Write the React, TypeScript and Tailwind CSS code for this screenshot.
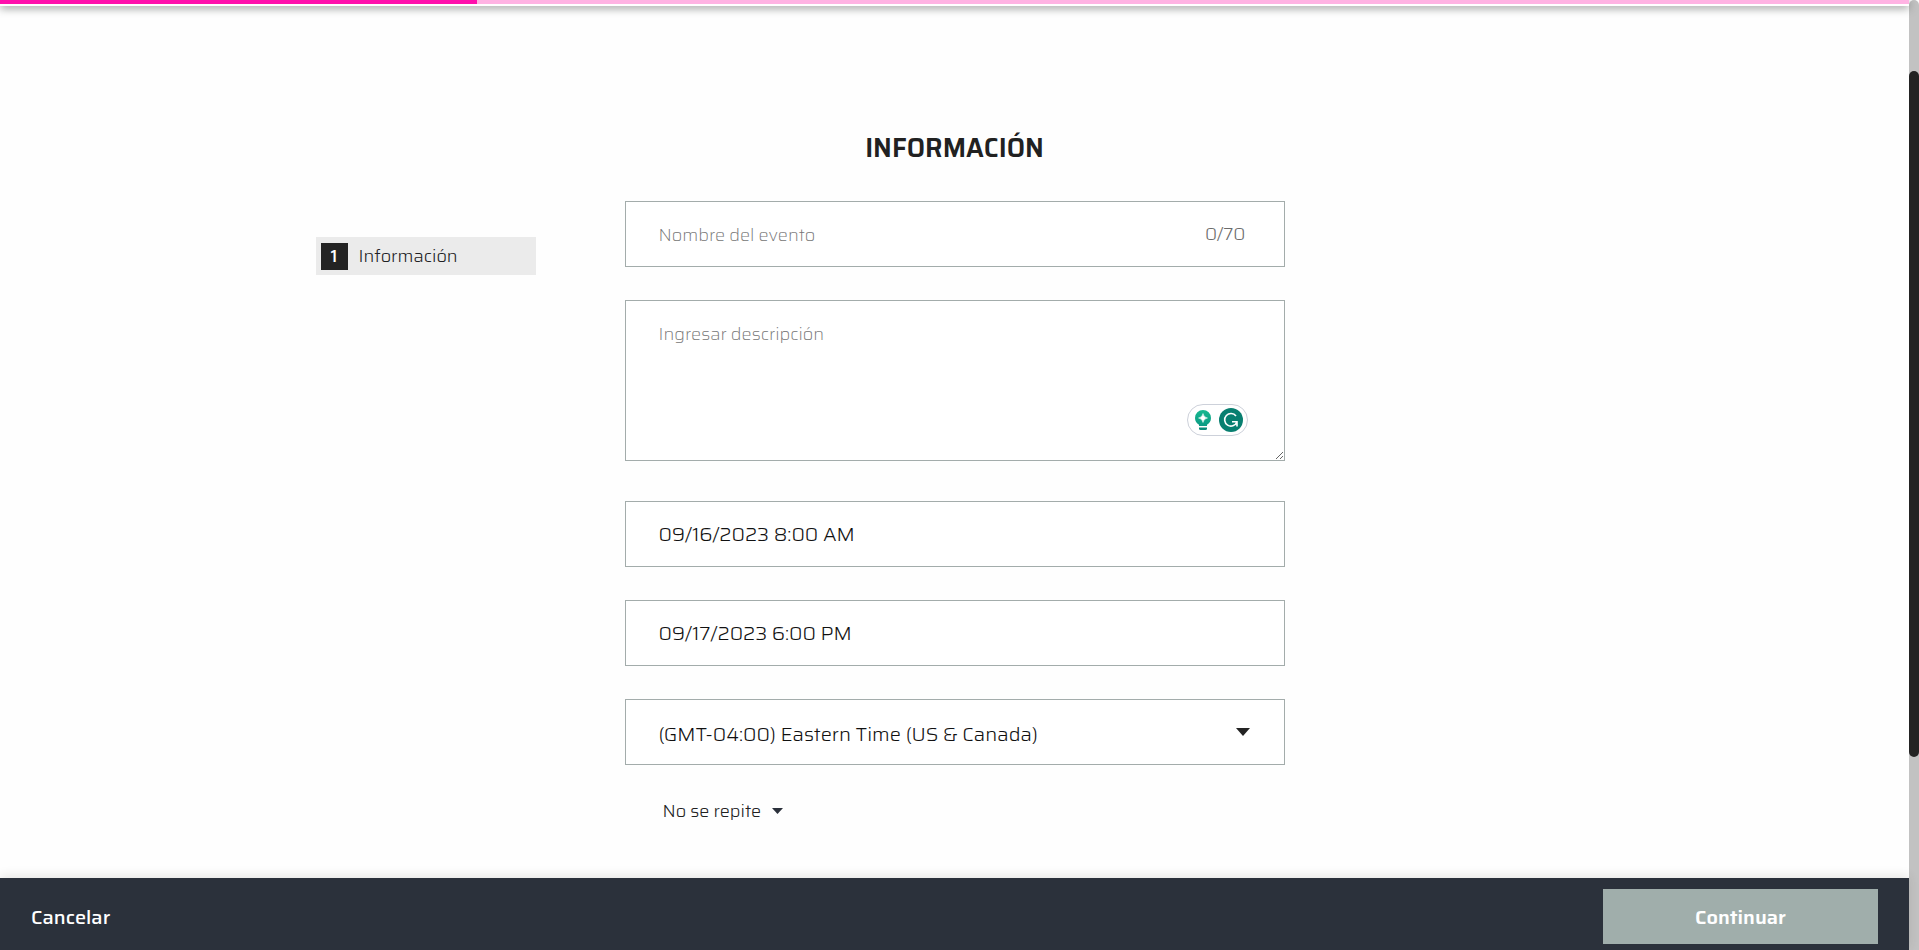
import type { ReactNode } from "react";

const steps = [{ id: 1, label: "Información" }];

const box = "border border-[#a3acab] bg-white";
const control = "w-full bg-transparent outline-none";

function Caret({ className }: { className: string }) {
  return (
    <svg viewBox="0 0 14 8" preserveAspectRatio="none" className={className} aria-hidden="true">
      <path d="M0 0h14L7 8z" fill="currentColor" />
    </svg>
  );
}

function ProgressHeader({ percent }: { percent: number }) {
  return (
    <header className="relative z-10 h-[6px] shrink-0 bg-white shadow-[0_2px_8px_rgba(60,66,64,0.6)]">
      <div
        role="progressbar"
        aria-label="Progreso"
        aria-valuenow={percent}
        aria-valuemin={0}
        aria-valuemax={100}
        className="h-1 bg-[#ffb3e3]"
      >
        <div className="h-full bg-[#ff10ac]" style={{ width: `${percent}%` }} />
      </div>
    </header>
  );
}

function StepList() {
  return (
    <nav aria-label="Pasos" className="pt-9">
      <ol>
        {steps.map((step) => (
          <li key={step.id} className="flex h-[38px] items-center gap-[11px] bg-[#ebebeb] px-[5px]">
            <span className="flex size-[27px] items-center justify-center bg-[#232323] text-[18px] font-medium text-white">
              {step.id}
            </span>
            <a href="#informacion" className="text-[18px] font-light text-[#212124]">
              {step.label}
            </a>
          </li>
        ))}
      </ol>
    </nav>
  );
}

function Field({ children }: { children: ReactNode }) {
  return <div className={`${box} flex h-[66px] items-center gap-4 pr-[38px] pl-[33px]`}>{children}</div>;
}

function WritingAssistant() {
  return (
    <button
      type="button"
      aria-label="Asistente de escritura"
      className="absolute right-[37px] bottom-[25px] flex h-8 w-[61px] items-center justify-between rounded-full border border-[#cdd1da] bg-white pr-1 pl-1.5"
    >
      <svg viewBox="0 0 18 22" className="h-[22px] w-[18px]" aria-hidden="true">
        <defs>
          <linearGradient id="bulb" x1="0" y1="0" x2="0" y2="1">
            <stop offset="0" stopColor="#17b890" />
            <stop offset="1" stopColor="#0b9a83" />
          </linearGradient>
        </defs>
        <path
          d="M9 1a8 8 0 0 0-8 8c0 3 1.600 5.400 4 6.800V17h8v-1.200c2.400-1.400 4-3.800 4-6.800a8 8 0 0 0-8-8z"
          fill="url(#bulb)"
        />
        <path d="M5 18.500h8v1q0 1.500-1.500 1.500h-5Q5 21 5 19.500z" fill="#0b8a78" />
        <path
          d="M9 4.500q.7 3.800 4.500 4.500Q9.700 9.700 9 13.500 8.300 9.700 4.500 9 8.300 8.300 9 4.500z"
          fill="#fff"
          stroke="#fff"
          strokeWidth=".5"
        />
      </svg>
      <svg viewBox="0 0 24 24" className="size-6" aria-hidden="true">
        <circle cx="12" cy="12" r="12" fill="#087f70" />
        <path
          d="M17 8A6.300 6.300 0 1 0 17.800 14.200M13 13.700h5v4.800"
          fill="none"
          stroke="#fff"
          strokeWidth="1.600"
        />
      </svg>
    </button>
  );
}

function EventForm() {
  return (
    <form id="informacion" className="flex flex-col text-[20px] font-light text-[#111111]">
      <Field>
        <input
          type="text"
          aria-label="Nombre del evento"
          maxLength={70}
          placeholder="Nombre del evento"
          className={`${control} pt-0.5 text-[18px] placeholder:font-extralight placeholder:text-[#757575]`}
        />
        <span className="text-[18px] text-[#6b6b6b]">0/70</span>
      </Field>

      <div className="relative mt-[33px] mb-10">
        <textarea
          aria-label="Descripción"
          placeholder="Ingresar descripción"
          className={`${box} block h-[161px] w-full resize px-[33px] py-[21px] text-[18px] leading-6 outline-none placeholder:font-extralight placeholder:text-[#757575]`}
        />
        <WritingAssistant />
      </div>

      <div className="flex flex-col gap-[33px]">
        <Field>
          <input type="text" aria-label="Inicio" defaultValue="09/16/2023 8:00 AM" className={control} />
        </Field>
        <Field>
          <input type="text" aria-label="Fin" defaultValue="09/17/2023 6:00 PM" className={control} />
        </Field>
        <div className={`${box} grid h-[66px] items-center`}>
          <select
            aria-label="Zona horaria"
            className="col-start-1 row-start-1 h-full w-full appearance-none bg-transparent pt-1 pr-16 pl-[33px] outline-none"
          >
            <option>(GMT-04:00) Eastern Time (US &amp; Canada)</option>
          </select>
          <Caret className="pointer-events-none col-start-1 row-start-1 mr-[34px] h-2 w-[14px] justify-self-end text-[#232323]" />
        </div>
      </div>

      <div className="mt-8 ml-[38px] grid items-center self-start">
        <select
          aria-label="Repetición"
          className="col-start-1 row-start-1 appearance-none bg-transparent pr-8 text-[18px] leading-7 text-[#212121] outline-none"
        >
          <option>No se repite</option>
        </select>
        <Caret className="pointer-events-none col-start-1 row-start-1 mr-[11px] h-1.5 w-[11px] justify-self-end text-[#2b313b]" />
      </div>
    </form>
  );
}

export default function App() {
  return (
    <div className="flex h-screen bg-[#fefefe] font-['Saira','Roboto',sans-serif]">
      <div className="flex min-w-0 flex-1 flex-col">
        <ProgressHeader percent={25} />

        <main className="min-h-0 flex-1 overflow-hidden pt-[122px]">
          <h1 className="text-center text-[26px] leading-10 font-semibold text-[#212121]">INFORMACIÓN</h1>
          <div className="mt-[33px] grid grid-cols-[220px_minmax(0,660px)_220px] justify-center gap-x-[89px]">
            <StepList />
            <EventForm />
          </div>
        </main>

        <footer className="relative flex h-[72px] shrink-0 items-center justify-between bg-[#2b313b] px-[31px] pt-[5px] shadow-[0_-2px_10px_rgba(60,50,30,0.12)]">
          <button type="button" className="text-[20px] font-medium text-white">
            Cancelar
          </button>
          <button type="button" className="h-[55px] w-[275px] bg-[#a0aeab] text-[20px] font-semibold text-white">
            Continuar
          </button>
        </footer>
      </div>

      <div className="flex w-2.5 shrink-0 flex-col rounded-t-full bg-[#c2c2c2] pt-[71px]" aria-hidden="true">
        <div className="h-[78%] rounded-full bg-[#232323]" />
      </div>
    </div>
  );
}
